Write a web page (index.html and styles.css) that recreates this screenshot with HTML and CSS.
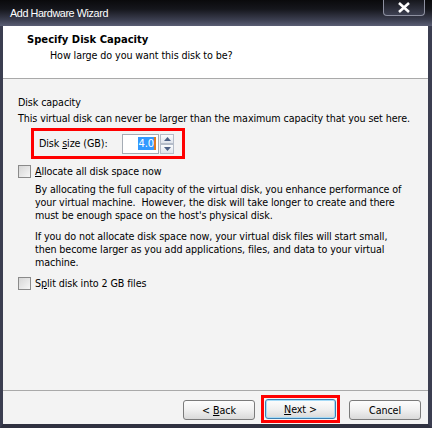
FILE: index.html
```html
<!DOCTYPE html>
<html>
<head>
<meta charset="utf-8">
<link rel="stylesheet" href="styles.css">
</head>
<body>
<div class="window">
  <div class="titlebar">
    <span class="title">Add Hardware Wizard</span>
    <div class="close"><svg width="14" height="11" viewBox="0 0 14 11"><path d="M2 1 L12 10 M12 1 L2 10" stroke="#fff" stroke-width="2.6" fill="none"/></svg></div>
  </div>
  <div class="frame">
    <div class="header">
      <div class="h-title">Specify Disk Capacity</div>
      <div class="h-sub">How large do you want this disk to be?</div>
    </div>
    <div class="content">
      <div class="line">Disk capacity</div>
      <div class="line l2">This virtual disk can never be larger than the maximum capacity that you set here.</div>
      <div class="redbox">
        <span class="lbl">Disk <u>s</u>ize (GB):</span>
        <div class="input"><span class="sel">4.0</span><span class="caret"></span></div>
        <div class="spin">
          <div class="sbtn"><svg width="7" height="4" viewBox="0 0 7 4"><path d="M0 4 L3.5 0 L7 4 Z" fill="#4d6185"/></svg></div>
          <div class="sbtn"><svg width="7" height="4" viewBox="0 0 7 4"><path d="M0 0 L3.5 4 L7 0 Z" fill="#4d6185"/></svg></div>
        </div>
      </div>
      <div class="check"><span class="box"></span><span><u>A</u>llocate all disk space now</span></div>
      <p class="para">By allocating the full capacity of the virtual disk, you enhance performance of your virtual machine.&nbsp; However, the disk will take longer to create and there must be enough space on the host's physical disk.</p>
      <p class="para">If you do not allocate disk space now, your virtual disk files will start small, then become larger as you add applications, files, and data to your virtual machine.</p>
      <div class="check c2"><span class="box"></span><span>S<u>p</u>lit disk into 2 GB files</span></div>
    </div>
    <div class="footer">
      <button class="btn">&lt; <u>B</u>ack</button>
      <div class="redwrap"><button class="btn focus"><u>N</u>ext &gt;</button></div>
      <button class="btn">Cancel</button>
    </div>
  </div>
</div>
</body>
</html>
```

FILE: styles.css
```css
html, body {
  margin: 0;
  padding: 0;
  background: #2b2e3d;
}
.window {
  width: 432px;
  height: 428px;
  display: flex;
  flex-direction: column;
  font-family: "DejaVu Sans", sans-serif;
  font-size: 9.6px;
  letter-spacing: -0.1px;
  color: #000;
  overflow: hidden;
}
.titlebar {
  height: 26px;
  flex: none;
  display: flex;
  align-items: flex-start;
  justify-content: space-between;
  background: linear-gradient(#0a0a0c 0%, #15161c 35%, #3a3d4e 75%, #5a5e74 100%);
  padding-left: 10px;
  box-sizing: border-box;
}
.title {
  color: #fff;
  font-family: "Liberation Sans", sans-serif;
  font-size: 10.8px;
  letter-spacing: -0.4px;
  line-height: 27px;
}
.close {
  width: 40px;
  height: 15px;
  margin-right: 7px;
  border: 1px solid #8d90a0;
  border-top: none;
  border-radius: 0 0 4px 4px;
  background: linear-gradient(#16171d, #3e4152);
  display: flex;
  align-items: center;
  justify-content: center;
}
.frame {
  flex: 1;
  display: flex;
  flex-direction: column;
  border-left: 3px solid #3b3e50;
  border-right: 4px solid #3b3e50;
  border-bottom: 4px solid #2f3140;
  background: #f3f3f3;
}
.header {
  height: 53px;
  flex: none;
  background: #fff;
  border-bottom: 1px solid #a9a9a9;
  box-sizing: border-box;
  padding-top: 7px;
}
.h-title {
  font-weight: bold;
  font-size: 10px;
  letter-spacing: 0;
  padding-left: 24px;
  line-height: 13px;
  height: 13px;
}
.h-sub {
  padding-left: 47px;
  line-height: 13px;
  margin-top: 3px;
}
.content {
  flex: 1;
  padding: 17px 0 0 15px;
}
.line {
  line-height: 13px;
  height: 13px;
  white-space: nowrap;
}
.l2 {
  margin-top: 3px;
}
.redbox {
  margin: 3px 0 0 13px;
  width: 154px;
  height: 31px;
  box-sizing: border-box;
  border: 3px solid #ff0000;
  display: flex;
  align-items: center;
  padding-left: 5px;
}
.lbl {
  width: 83px;
  line-height: 13px;
}
.input {
  width: 37px;
  height: 20px;
  box-sizing: border-box;
  border: 1px solid #a5acb5;
  background: #fff;
  display: flex;
  align-items: center;
  justify-content: flex-end;
  padding-right: 2px;
}
.sel {
  background: #3399ff;
  color: #fff;
  line-height: 13px;
  font-size: 10px;
}
.caret {
  width: 2px;
  height: 13px;
  background: #e07a1f;
}
.spin {
  display: flex;
  flex-direction: column;
  margin-left: 1px;
  height: 20px;
}
.sbtn {
  width: 14px;
  height: 10px;
  box-sizing: border-box;
  border: 1px solid #b5bdc9;
  background: linear-gradient(#fbfcfd, #dfe4ec);
  display: flex;
  align-items: center;
  justify-content: center;
}
.check {
  display: flex;
  align-items: center;
  line-height: 13px;
  margin-top: 6px;
}
.box {
  width: 13px;
  height: 13px;
  box-sizing: border-box;
  border: 1px solid #8a8a8a;
  background: linear-gradient(135deg, #d6d6d6, #f6f6f6);
  margin-right: 4px;
}
.para {
  margin: 5px 0 0 17px;
  width: 374px;
  line-height: 13px;
}
.para + .para {
  margin-top: 8px;
}
.c2 {
  margin-top: 8px;
}
.footer {
  height: 34px;
  flex: none;
  border-top: 1px solid #a9a9a9;
  box-sizing: border-box;
  display: flex;
  justify-content: flex-end;
  align-items: flex-start;
  padding: 8px 7px 0 0;
  gap: 6px;
}
.btn {
  width: 72px;
  height: 20px;
  font-family: "DejaVu Sans", sans-serif;
  font-size: 9.6px;
  letter-spacing: -0.1px;
  color: #000;
  border: 1px solid #7b7b7b;
  border-radius: 3px;
  background: linear-gradient(#fdfdfd 0%, #f0f0f0 50%, #d9d9d9 100%);
  padding: 0;
  margin-top: 1px;
}
.redwrap {
  border: 3px solid #ff0000;
  padding: 1px;
  margin-top: -4px;
  margin-right: 3px;
}
.focus {
  width: 71px;
  margin-top: 0;
  border-color: #3c7fb1;
  box-shadow: inset 0 0 0 1px #a6dbf7;
}
```
